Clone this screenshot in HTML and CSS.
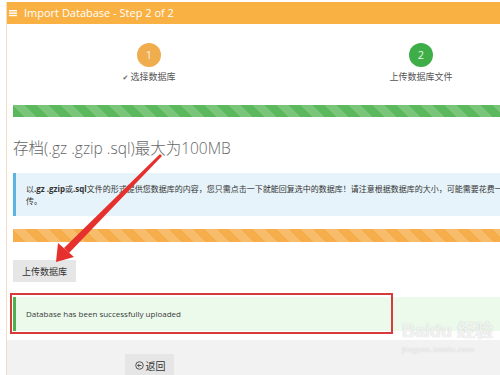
FILE: index.html
```html
<!DOCTYPE html>
<html lang="zh">
<head>
<meta charset="utf-8">
<title>Import Database</title>
<link rel="stylesheet" href="styles.css">
</head>
<body>
<div class="page">
  <div class="panel">
    <div class="panel-head">
      <svg class="menu-icon" width="8" height="8" viewBox="0 0 8 8"><rect x="0" y="1" width="8" height="1.4" fill="#fff"/><rect x="0" y="3.4" width="8" height="1.4" fill="#fff"/><rect x="0" y="5.8" width="8" height="1.4" fill="#fff"/></svg>
      <span>Import Database - Step 2 of 2</span>
    </div>
    <div class="panel-body">
      <div class="steps">
        <div class="step">
          <div class="circle circle-orange">1</div>
          <div class="step-label"><span class="check">✔</span> 选择数据库</div>
        </div>
        <div class="step">
          <div class="circle circle-green">2</div>
          <div class="step-label">上传数据库文件</div>
        </div>
      </div>
      <div class="bar bar-green"></div>
      <h2 class="title">存档(.gz .gzip .sql)最大为100MB</h2>
      <div class="alert alert-info">以<b>.gz .gzip</b>或<b>.sql</b>文件的形式提供您数据库的内容，您只需点击一下就能回复选中的数据库！请注意根据数据库的大小，可能需要花费一些时间来上<br>传。</div>
      <div class="bar bar-orange"></div>
      <button class="btn">上传数据库</button>
      <div class="alert alert-success">Database has been successfully uploaded</div>
    </div>
    <div class="panel-foot">
      <div class="foot-col">
        <button class="btn btn-back"><svg class="back-icon" width="9" height="9" viewBox="0 0 10 10"><circle cx="5" cy="5" r="4.2" fill="none" stroke="#444" stroke-width="1"/><path d="M7.2 5H3M4.8 3.2L3 5l1.8 1.8" fill="none" stroke="#444" stroke-width="1"/></svg>返回</button>
      </div>
    </div>
  </div>

  <div class="highlight"></div>

  <svg class="arrow" width="500" height="375" viewBox="0 0 500 375">
    <polygon points="160,154 162,156 69,253 64,248" fill="#e5302d"/>
    <polygon points="56,262 58,243 74,257" fill="#e5302d"/>
  </svg>

  <div class="watermark">
    <div class="wm-big">Baidu 经验</div>
    <div class="wm-small">jingyan.baidu.com</div>
  </div>
</div>
</body>
</html>
```

FILE: styles.css
```css
html, body {
  margin: 0;
  padding: 0;
  background: #fff;
  overflow: hidden;
}

.page {
  position: relative;
  width: 500px;
  height: 375px;
  overflow: hidden;
  font-family: "Open Sans", "Noto Sans CJK SC", sans-serif;
}

.panel {
  margin: 2px 0 0 6px;
  width: 560px;
  border-left: 1px solid #f3dcc2;
}

.panel-head {
  height: 22px;
  background: #fab144;
  color: #fff;
  font-size: 11px;
  line-height: 22px;
  display: flex;
  align-items: center;
  padding-left: 2px;
  gap: 7px;
}

.panel-body {
  padding: 0 0 9px 6px;
}

.steps {
  display: grid;
  grid-template-columns: 272px 272px;
  padding: 19px 0 21px;
}

.step {
  display: flex;
  flex-direction: column;
  align-items: center;
}

.circle {
  width: 24px;
  height: 24px;
  border-radius: 50%;
  color: #fdf2e2;
  font-size: 11px;
  line-height: 24px;
  text-align: center;
}

.circle-orange { background: #f0ad4e; }
.circle-green { background: #3fae49; color: #e8f6e8; }

.step-label {
  margin-top: 4px;
  font-size: 9px;
  line-height: 12px;
  color: #555;
}

.check {
  font-family: "DejaVu Sans", sans-serif;
  font-size: 7px;
  color: #666;
}

.bar {
  height: 12px;
  background-size: 24px 24px;
  background-image: linear-gradient(45deg, rgba(255,255,255,.18) 25%, transparent 25%, transparent 50%, rgba(255,255,255,.18) 50%, rgba(255,255,255,.18) 75%, transparent 75%, transparent);
}

.bar-green { background-color: #5cb85c; }
.bar-orange { background-color: #f5ae4b; height: 13px; margin-top: 13px; }

.title {
  margin: 21px 0 15px;
  font-size: 15.5px;
  line-height: 20px;
  font-weight: 300;
  color: #666;
}

.alert {
  border-left: 3px solid;
  font-size: 8px;
  line-height: 12px;
  color: #333;
  padding-left: 10px;
}

.alert-info {
  background: #e7f3fa;
  border-left-color: #5bb5e0;
  padding-top: 10px;
  padding-bottom: 9px;
}

.alert-info b { font-weight: 700; }

.btn {
  display: block;
  border: 0;
  background: #e6e6e6;
  color: #333;
  font-family: "Open Sans", "Noto Sans CJK SC", sans-serif;
  font-size: 9px;
  height: 22px;
  padding: 0 9px;
  margin: 18px 0 0;
  cursor: pointer;
}

.alert-success {
  margin-top: 15px;
  background: #ebfaeb;
  border-left-color: #4cb34c;
  padding-top: 11px;
  padding-bottom: 11px;
  color: #3a3a3a;
}

.panel-foot {
  background: #f2f2f2;
  padding: 14px 0 10px 6px;
  display: grid;
  grid-template-columns: 272px 272px;
}

.foot-col {
  display: flex;
  justify-content: center;
}

.btn-back {
  margin: 0;
  display: flex;
  align-items: center;
  gap: 2px;
  padding: 0 8px 0 10px;
  font-size: 10px;
}

.highlight {
  position: absolute;
  left: 10px;
  top: 293px;
  width: 383px;
  height: 41px;
  box-sizing: border-box;
  border: 2px solid #d8393b;
}

.arrow {
  position: absolute;
  left: 0;
  top: 0;
  pointer-events: none;
}

.watermark {
  position: absolute;
  left: 402px;
  top: 320px;
  white-space: nowrap;
  color: rgba(255,255,255,0.8);
  text-shadow: 0 0 1px rgba(140,140,140,0.55);
  font-family: "Liberation Sans", "Noto Sans CJK SC", sans-serif;
}

.wm-big {
  font-size: 18px;
  font-weight: 700;
  line-height: 22px;
}

.wm-small {
  font-size: 8px;
  line-height: 10px;
  margin-top: 3px;
  letter-spacing: 0.5px;
}
```
